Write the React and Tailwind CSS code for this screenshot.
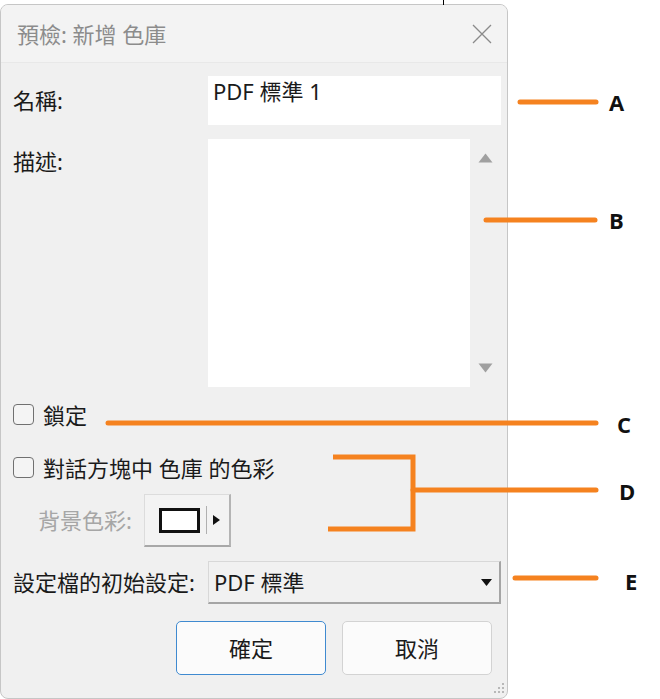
import React from "react";

const F = { fontFamily: '"Noto Sans", "Noto Sans CJK TC", sans-serif' };
const L = { fontFamily: '"Open Sans", sans-serif' };

function Checkbox({ label }) {
  return (
    <div className="flex items-center h-[23px] pl-[12px] gap-[9px]">
      <div className="w-[21px] h-[21px] rounded-[4px] border-[1.5px] border-[#707070] bg-[#f4f4f4]" />
      <span className="text-[22px] leading-none text-[#1a1a1a]">{label}</span>
    </div>
  );
}

export default function App() {
  return (
    <div className="relative w-[660px] h-[699px] bg-white overflow-hidden" style={F}>
      {/* dialog */}
      <div className="ml-0 mt-[4px] w-[508px] h-[695px] border border-[#c6c6c6] rounded-[8px] bg-[#f0f0f0] overflow-hidden flex flex-col">
        {/* title bar */}
        <div className="h-[58px] shrink-0 bg-[#f3f3f3] border-b border-[#e8e8e8] flex items-center justify-between pl-[16px] pr-[14px]">
          <span className="text-[22px] text-[#8c8c8c] leading-none">預檢: 新增 色庫</span>
          <svg width="20" height="20" viewBox="0 0 20 20" className="mr-[1px]">
            <path d="M1 1 L19 19 M19 1 L1 19" stroke="#8a8a8a" strokeWidth="1.3" fill="none" />
          </svg>
        </div>

        {/* body */}
        <div className="flex flex-col pt-[13px]">
          {/* name row */}
          <div className="flex items-center h-[49px]">
            <div className="w-[207px] pl-[12px] text-[22px] text-[#1a1a1a]">名稱:</div>
            <div className="w-[293px] h-[49px] bg-white px-[5px] pt-[1px] text-[22px] text-[#1a1a1a] leading-[28px]">PDF 標準 1</div>
          </div>

          {/* description row */}
          <div className="flex mt-[14px] h-[248px]">
            <div className="w-[207px] pl-[12px] pt-[8px] text-[22px] text-[#1a1a1a] leading-[28px]">描述:</div>
            <div className="w-[262px] h-[248px] bg-white" />
            <div className="w-[31px] flex flex-col items-center justify-between py-[14px]">
              <svg width="15" height="10" viewBox="0 0 15 10"><path d="M7.5 0.5 L14.5 9.5 L0.5 9.5 Z" fill="#a0a0a0" /></svg>
              <svg width="15" height="10" viewBox="0 0 15 10"><path d="M0.5 0.5 L14.5 0.5 L7.5 9.5 Z" fill="#a0a0a0" /></svg>
            </div>
          </div>

          <div className="mt-[16px]"><Checkbox label="鎖定" /></div>
          <div className="mt-[30px]"><Checkbox label="對話方塊中 色庫 的色彩" /></div>

          {/* background colour row */}
          <div className="flex items-center mt-[15px] h-[53px]">
            <div className="w-[143px] pl-[37px] text-[22px] text-[#a6a6a6] whitespace-nowrap">背景色彩:</div>
            <div className="w-[87px] h-[53px] flex items-center pl-[14px] bg-[#f3f3f3] border border-[#dcdcdc] border-b-[2px] border-b-[#a8a8a8] border-r-[2px] border-r-[#b4b4b4]">
              <div className="w-[41px] h-[25px] border-[3px] border-[#111] bg-white" />
              <div className="w-px h-[28px] bg-[#b0b0b0] ml-[6px]" />
              <svg width="7" height="10" viewBox="0 0 7 10" className="ml-[6px]"><path d="M0 0 L7 5 L0 10 Z" fill="#111" /></svg>
            </div>
          </div>

          {/* profile row */}
          <div className="flex items-center mt-[14px] h-[43px]">
            <div className="w-[207px] pl-[12px] text-[22px] text-[#1a1a1a] whitespace-nowrap">設定檔的初始設定:</div>
            <div className="w-[293px] h-[43px] flex items-center justify-between pl-[5px] pr-[7px] bg-[#f1f1f1] border border-[#d8d8d8] border-b-[2px] border-b-[#a5a5a5] border-r-[2px] border-r-[#a5a5a5]">
              <span className="text-[22px] text-[#1a1a1a]">PDF 標準</span>
              <svg width="11" height="7" viewBox="0 0 11 7"><path d="M0 0 L11 0 L5.5 7 Z" fill="#111" /></svg>
            </div>
          </div>

          {/* buttons */}
          <div className="flex mt-[17px] h-[54px] pl-[175px] gap-[16px]">
            <button className="w-[150px] h-[54px] rounded-[5px] border border-[#3f8ad0] bg-[#fbfbfb] text-[22px] text-[#1a1a1a]">確定</button>
            <button className="w-[150px] h-[54px] rounded-[5px] border border-[#d3d3d3] bg-[#fbfbfb] text-[22px] text-[#1a1a1a]">取消</button>
          </div>

          {/* resize grip */}
          <div className="flex justify-end pr-[2px] mt-[7px]">
            <svg width="12" height="12" viewBox="0 0 12 12">
              {[[9,1],[9,5],[5,5],[9,9],[5,9],[1,9]].map(([x,y],i)=>(<rect key={i} x={x} y={y} width="2" height="2" fill="#b8b8b8" />))}
            </svg>
          </div>
        </div>
      </div>

      {/* top tick */}
      <div className="absolute left-[443px] top-0 w-px h-[5px] bg-black" />

      {/* annotations */}
      <svg className="absolute left-0 top-0 pointer-events-none" width="660" height="699">
        <g stroke="#f5821f" strokeWidth="5" strokeLinecap="round" fill="none">
          <line x1="520" y1="102" x2="596" y2="102" />
          <line x1="486" y1="220" x2="595" y2="220" />
          <line x1="108" y1="423" x2="596" y2="423" />
          <polyline points="333,457 413,457 413,529 328,529" strokeLinecap="butt" />
          <line x1="413" y1="490" x2="596" y2="490" />
          <line x1="515" y1="578" x2="596" y2="578" />
        </g>
      </svg>
      <span className="absolute left-[609px] top-[88px] text-[22px] font-bold leading-[28px] text-[#111]" style={L}>A</span>
      <span className="absolute left-[609px] top-[206px] text-[22px] font-bold leading-[28px] text-[#111]" style={L}>B</span>
      <span className="absolute left-[617px] top-[410px] text-[22px] font-bold leading-[28px] text-[#111]" style={L}>C</span>
      <span className="absolute left-[619px] top-[477px] text-[22px] font-bold leading-[28px] text-[#111]" style={L}>D</span>
      <span className="absolute left-[625px] top-[567px] text-[22px] font-bold leading-[28px] text-[#111]" style={L}>E</span>
    </div>
  );
}
